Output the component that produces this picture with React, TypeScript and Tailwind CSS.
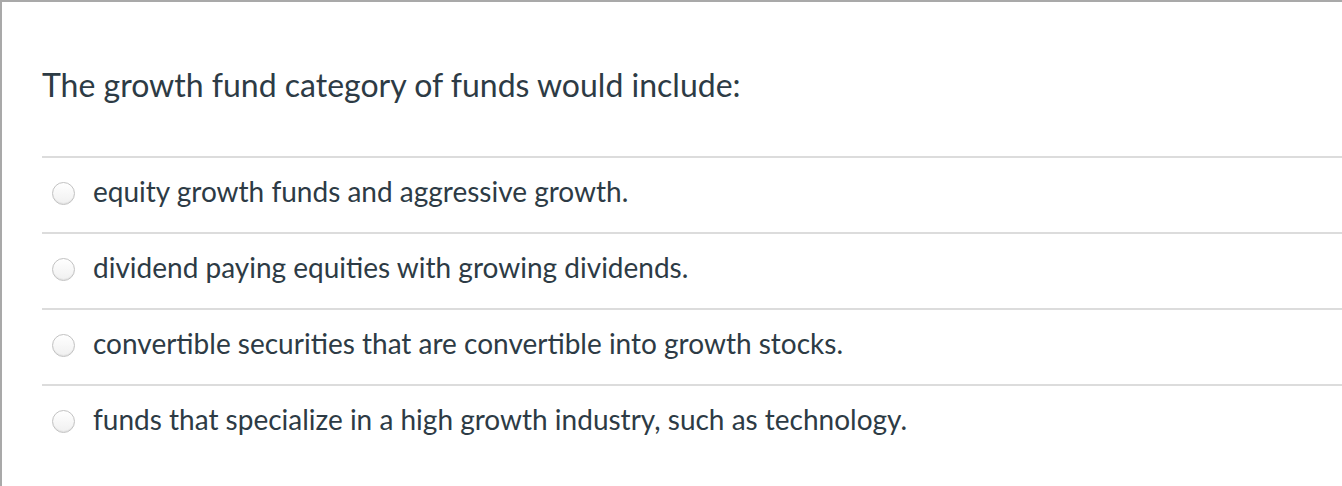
import React from "react";

const options = [
  "equity growth funds and aggressive growth.",
  "dividend paying equities with growing dividends.",
  "convertible securities that are convertible into growth stocks.",
  "funds that specialize in a high growth industry, such as technology.",
];

export default function App() {
  return (
    <div
      className="h-[486px] w-[1342px] overflow-hidden border-l-2 border-t-2 border-[#a9a9a9] bg-white text-[#2d3b45]"
      style={{ fontFamily: "Lato, 'Open Sans', sans-serif" }}
    >
      <div className="pl-[40px] pt-[63px]">
        <h1 className="text-[32px] leading-[40px] font-normal">
          The growth fund category of funds would include:
        </h1>
        <div className="mt-[51px]">
          {options.map((o) => (
            <div
              key={o}
              className="flex h-[76px] items-center border-t-2 border-[#dcdcdc] pb-[4px]"
            >
              <span className="ml-[10px] flex h-[23px] w-[23px] shrink-0 rounded-full border border-[#c2c2c2] bg-gradient-to-b from-white to-[#f0f0f0] shadow-[inset_0_-1px_1px_rgba(0,0,0,0.06)]" />
              <span className="ml-[18px] mb-[4px] text-[28px] leading-[32px]">{o}</span>
            </div>
          ))}
        </div>
      </div>
    </div>
  );
}
